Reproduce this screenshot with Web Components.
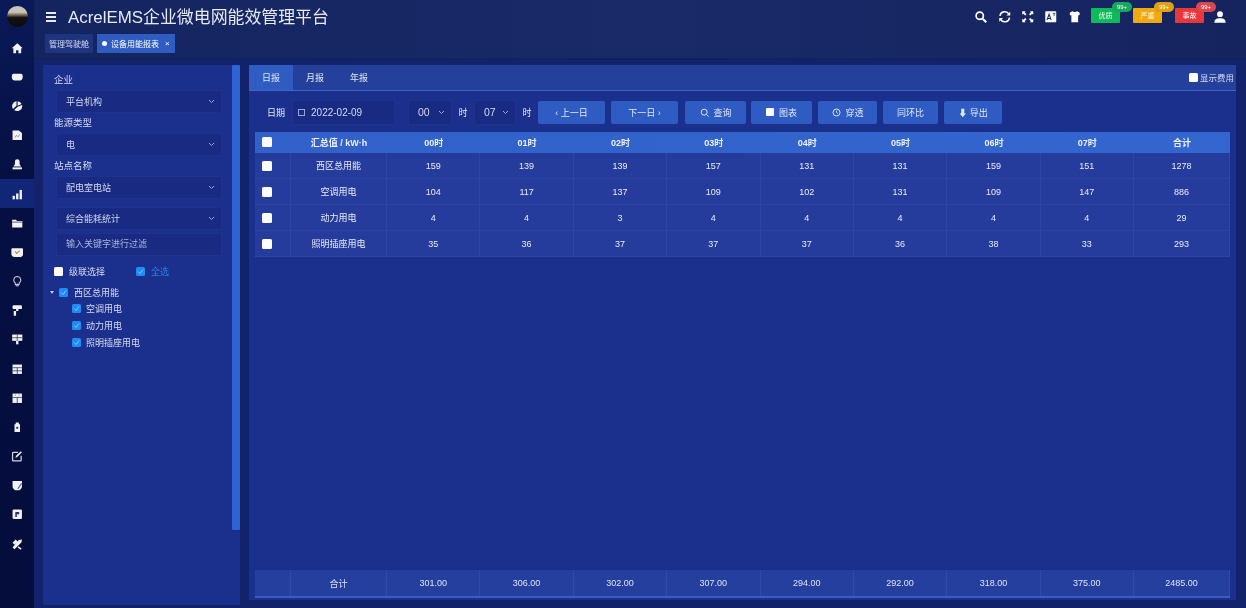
<!DOCTYPE html>
<html lang="zh">
<head>
<meta charset="utf-8">
<title>AcrelEMS</title>
<style>
  html, body { margin: 0; height: 100%; background: #13236b; overflow: hidden; }
  body { font-family: "Liberation Sans", "Noto Sans CJK SC", sans-serif; color: #fff; }
</style>
</head>
<body>
<ems-app></ems-app>
<script>
  const FONT = '"Liberation Sans", "Noto Sans CJK SC", sans-serif';

  // white glyphs, all on a 16x16 box
  const ICONS = {
    home: '<path d="M8 1.500 1 8h2v6.500h3.500v-4h3v4H13V8h2z"/>',
    chat: '<path d="M3.500 3.500h9c1.800 0 2.500 1.600 2.500 4s-1 4.500-3 4.500H4c-2 0-3-2-3-4.500s.7-4 2.500-4z"/>',
    pie: '<path d="M7 1.500v6L2.500 11.500A6.500 6.500 0 0 1 7 1.500z"/><path d="M8.500 1.500a6.500 6.500 0 0 1 5 3.500l-5 2.500z"/><path d="M14.300 6.500A6.500 6.500 0 0 1 4 12.800l4.500-4.300z"/>',
    file: '<path d="M2 2h8l4 3v9H2z"/><path d="M5 11l2-3 2 2 2-3" fill="none" stroke="#8b93b8" stroke-width="1.200"/>',
    bell: '<path d="M8 1.500a3 3 0 0 1 3 3V8l2 3H3l2-3V4.500a3 3 0 0 1 3-3z"/><rect x="2" y="12" width="12" height="2.500"/>',
    bars: '<rect x="2" y="10" width="3" height="4.500"/><rect x="6.500" y="7" width="3" height="7.500"/><rect x="11" y="2.500" width="3" height="12"/>',
    folder: '<path d="M1.500 3.500h5l1 1.500h7v8.500h-13z"/><rect x="1.500" y="6" width="13" height="1" fill="#2a3a70"/>',
    inbox: '<path d="M2 3h12c1 0 1.500.5 1.500 1.500v6c0 2-2 3.500-4 3.500h-7c-2 0-4-1.500-4-3.500v-6C.5 3.500 1 3 2 3z"/><path d="M5 7l2.500 2.500L11 6" fill="none" stroke="#c68a3a" stroke-width="1.300"/>',
    bulb: '<path d="M8 2a4.500 4.500 0 0 1 2.500 8.200V12h-5v-1.800A4.500 4.500 0 0 1 8 2z" fill="none" stroke="#c9cee4" stroke-width="1.300"/><rect x="6" y="13" width="4" height="1.500" fill="#c9cee4"/>',
    roller: '<rect x="2" y="1.500" width="12" height="5" rx="1.500"/><rect x="6.500" y="6" width="3" height="3"/><rect x="3.500" y="9" width="3" height="6"/>',
    board: '<rect x="1.500" y="2" width="13" height="8"/><rect x="6.500" y="10" width="3" height="4.500"/><path d="M1.500 6h13M8 2v8" stroke="#2a3a70"/>',
    calc: '<rect x="2" y="2" width="12" height="12"/><path d="M2 6h12M2 10h12M8 6v8" stroke="#2a3a70"/>',
    cal: '<rect x="2" y="2" width="12" height="12"/><path d="M2 7h12M8 7v7" stroke="#2a3a70"/><path d="M5 4h1M10 4h1" stroke="#2a3a70"/>',
    lock: '<path d="M6 2h4v2h1.500v10h-7V4H6z"/><rect x="6.800" y="7.500" width="2.400" height="2.400" fill="#16225c"/>',
    edit: '<path d="M13 7.500V13a1 1 0 0 1-1 1H3a1 1 0 0 1-1-1V4a1 1 0 0 1 1-1h6" fill="none" stroke="#d8dcf0" stroke-width="1.600"/><path d="M14 3 8 9l-2.500 1 1-2.500 6-6z"/>',
    note: '<path d="M2 2.500h12v7c0 3-2.500 5-6 5-3.500 0-6-2-6-5z"/><path d="M13 5l-4 6-1 2 2-1 4-6z" fill="#5a6590"/>',
    flag: '<rect x="2" y="2" width="12" height="12" rx="1.500"/><path d="M5.500 5h5v3h-3v3.500h-2z" fill="#2a3570"/>',
    tools: '<path d="M2 6l4-4 2.500 2.500-4 4zM10 2.500 14 2l-.5 3.500-9 9-2.500-2.500z"/><path d="M9.500 10.500l4 3-1 1.500-4-3z"/>',
    search: '<circle cx="6.800" cy="6.800" r="4.300" fill="none" stroke="#fff" stroke-width="2"/><path d="M10 10l4.500 4.500" stroke="#fff" stroke-width="2.400"/>',
    refresh: '<path d="M2.300 7A5.800 5.800 0 0 1 13 4.800M13.700 9A5.800 5.800 0 0 1 3 11.200" fill="none" stroke="#fff" stroke-width="1.800"/><path d="M14.500 2v4.500H10zM1.500 14V9.500H6z"/>',
    full: '<path d="M1.500 1.500h4L4.300 2.800 6.500 5 5 6.500 2.800 4.300 1.500 5.500zM14.500 1.500h-4l1.200 1.300L9.500 5 11 6.500l2.200-2.200 1.300 1.200zM1.500 14.500h4l-1.200-1.300L6.500 11 5 9.500l-2.200 2.200-1.300-1.200zM14.500 14.500h-4l1.200-1.300L9.500 11l1.500-1.500 2.200 2.200 1.300-1.200z"/>',
    trans: '<rect x="1.500" y="1.500" width="13" height="13" rx="1"/><path d="M3.500 12 6 5l2.500 7M4.500 10h3" fill="none" stroke="#22316e" stroke-width="1.300"/><path d="M10.500 4h3M12 4v3" stroke="#22316e"/>',
    shirt: '<path d="M5 1.500c1.500 1 4.500 1 6 0l2.500 1.500c.8 1 .5 2.500-.5 3.500l-1-.3V14.500H4V6.200l-1 .3c-1-1-1.300-2.500-.5-3.500z"/>',
    user: '<circle cx="8" cy="4.800" r="3.300"/><path d="M1.500 14.500c0-3.500 2.500-5 6.500-5s6.500 1.500 6.500 5z"/>'
  };
  const icon = (name, size) => `<svg width="${size}" height="${size}" viewBox="0 0 16 16" fill="#fff" aria-hidden="true">${ICONS[name]}</svg>`;

  class EmsSidebar extends HTMLElement {
    constructor() {
      super();
      this.attachShadow({ mode: 'open' });
      const names = ['home','chat','pie','file','bell','bars','folder','inbox','bulb','roller','board','calc','cal','lock','edit','note','flag','tools'];
      this.shadowRoot.innerHTML = `
        <style>
          :host { display: flex; flex-direction: column; width: 34px; background: linear-gradient(#0a1a58, #050f42 30%, #040d3b); }
          .logo { height: 33.400px; display: flex; align-items: center; justify-content: center; }
          .logo i { width: 21px; height: 21px; border-radius: 50%; background: linear-gradient(#c8c3b4 0 30%, #7a6f5c 42%, #15120f 55%, #0b0a12); }
          .item { height: 29.180px; display: flex; align-items: center; justify-content: center; opacity: .95; }
          .item.active { background: #13287a; }
        </style>
        <div class="logo"><i></i></div>
        ${names.map(n => `<div class="item ${n === 'bars' ? 'active' : ''}">${icon(n, 12.500)}</div>`).join('')}
      `;
    }
  }
  customElements.define('ems-sidebar', EmsSidebar);

  class EmsHeader extends HTMLElement {
    constructor() {
      super();
      this.attachShadow({ mode: 'open' });
      const tool = n => `<span class="tool">${icon(n, 13.500)}</span>`;
      const badge = (txt, count, bg, pill) => `<span class="badge" style="background:${bg}">${txt}<b style="background:${pill}">${count}</b></span>`;
      this.shadowRoot.innerHTML = `
        <style>
          :host { display: block; height: 60px; box-sizing: border-box; background: linear-gradient(90deg, #14245f, #1a2a69 50%, #15245f); border-bottom: 2px solid #12225f; }
          .top { display: flex; align-items: center; height: 33px; padding-left: 12px; }
          .menu { width: 10px; height: 10px; display: flex; flex-direction: column; justify-content: space-between; margin-right: 12px; }
          .menu i { height: 2px; background: #e8ebf8; }
          h1 { margin: -2px 0 0; font: 400 16.900px ${FONT}; color: #e6e9f6; flex: 1; }
          .tools { display: flex; align-items: center; padding-right: 19px; }
          .tool { width: 23.300px; display: flex; justify-content: center; }
          .tool + .badge { margin-left: 5px; }
          .badge { position: relative; width: 29px; height: 15px; margin-left: 13px; border-radius: 1px; font-size: 7px; line-height: 15px; text-align: center; color: #fff; top: -1px; }
          .badge b { position: absolute; left: 21px; top: -6px; width: 20px; height: 10px; border-radius: 5px; font: 400 6px/10px ${FONT}; }
          .me { margin-left: 9px; display: flex; }
          .tabs { display: flex; gap: 4px; padding-left: 11px; height: 19px; margin-top: 1px; }
          .tab { display: flex; align-items: center; padding: 0 4px; font-size: 8px; background: #1f347f; color: #d5daf0; }
          .tab.on { background: #2f5cc0; color: #fff; padding: 0 5px; gap: 4px; }
          .tab em { font-style: normal; margin-left: 2px; }
          .dot { width: 5px; height: 5px; border-radius: 50%; background: #fff; }
        </style>
        <div class="top">
          <div class="menu"><i></i><i></i><i></i></div>
          <h1>AcrelEMS企业微电网能效管理平台</h1>
          <div class="tools">
            ${['search','refresh','full','trans','shirt'].map(tool).join('')}
            ${badge('优质', '99+', '#10b95a', '#16a85c')}
            ${badge('严重', '99+', '#f0a90f', '#e0a011')}
            ${badge('事故', '99+', '#e8383c', '#d9474f')}
            <span class="me">${icon('user', 14)}</span>
          </div>
        </div>
        <div class="tabs">
          <span class="tab">管理驾驶舱</span>
          <span class="tab on"><i class="dot"></i>设备用能报表<em>×</em></span>
        </div>
      `;
    }
  }
  customElements.define('ems-header', EmsHeader);

  class EmsSelect extends HTMLElement {
    constructor() {
      super();
      this.attachShadow({ mode: 'open' });
      this.shadowRoot.innerHTML = `
        <style>
          :host { display: flex; align-items: center; justify-content: space-between; box-sizing: border-box; height: 23px; padding: 0 6px 0 9px; background: #182a82; border: 1px solid #1e338c; border-radius: 2px; font-size: 9px; color: #d5daf0; }
          svg { flex: none; }
        </style>
        <slot></slot>
        <svg width="7" height="5" viewBox="0 0 7 5"><path d="M1 1l2.500 2.500L6 1" fill="none" stroke="#9aa6d6" stroke-width="1"/></svg>
      `;
    }
  }
  customElements.define('ems-select', EmsSelect);

  class EmsCheck extends HTMLElement {
    constructor() {
      super();
      this.attachShadow({ mode: 'open' });
      const on = this.hasAttribute('checked');
      this.shadowRoot.innerHTML = `
        <style>
          :host { display: inline-flex; align-items: center; gap: 6px; font-size: 9px; color: #d8dcf2; }
          i { width: 9px; height: 9px; border-radius: 1.500px; background: ${on ? '#1f8cf5' : '#fff'}; display: flex; flex: none; }
        </style>
        <i>${on ? '<svg width="9" height="9" viewBox="0 0 9 9"><path d="M2 4.500 4 6.500 7 2.500" fill="none" stroke="#8cc6ff" stroke-width="1"/></svg>' : ''}</i>
        <slot></slot>
      `;
    }
  }
  customElements.define('ems-check', EmsCheck);

  class EmsFilter extends HTMLElement {
    constructor() {
      super();
      this.attachShadow({ mode: 'open' });
      this.shadowRoot.innerHTML = `
        <style>
          :host { display: flex; width: 197px; background: #1b308c; flex: none; }
          .body { flex: 1; padding: 10px 10px 0 11px; min-width: 0; }
          .bar { flex: none; width: 8px; height: 465px; background: #2f62d2; border-radius: 1px; }
          label { display: block; font-size: 9.500px; line-height: 10px; color: #d5daf0; margin-bottom: 5px; }
          ems-select { margin: 0 0 5px 2px; }
          ems-select.wide { margin-bottom: 8px; }
          ems-select.near { margin-bottom: 3px; }
          .input { margin-left: 2px; height: 23px; box-sizing: border-box; padding: 0 9px; border: 1px solid #1e338c; background: #182a82; font-size: 9px; line-height: 21px; color: #a9b4dc; }
          .all { display: flex; gap: 31px; margin-top: 10px; height: 10px; align-items: center; }
          .blue { color: #2b84e8; }
          .tree { margin-top: 7.500px; }
          .tree div { display: flex; align-items: center; height: 16.800px; padding-left: 18px; }
          .tree .root { padding-left: 0; margin-left: -4px; gap: 5px; height: 17px; }
          .tree ems-check { gap: 5px; }
          .tree .root ems-check { gap: 6px; }
          .caret { width: 0; height: 0; border: 2.500px solid transparent; border-top: 3px solid #c4cbe8; margin-top: 3px; }
        </style>
        <div class="body">
          <label>企业</label>
          <ems-select>平台机构</ems-select>
          <label>能源类型</label>
          <ems-select>电</ems-select>
          <label>站点名称</label>
          <ems-select class="wide">配电室电站</ems-select>
          <ems-select class="near">综合能耗统计</ems-select>
          <div class="input">输入关键字进行过滤</div>
          <div class="all">
            <ems-check>级联选择</ems-check>
            <ems-check checked><span class="blue">全选</span></ems-check>
          </div>
          <div class="tree">
            <div class="root"><i class="caret"></i><ems-check checked>西区总用能</ems-check></div>
            <div><ems-check checked>空调用电</ems-check></div>
            <div><ems-check checked>动力用电</ems-check></div>
            <div><ems-check checked>照明插座用电</ems-check></div>
          </div>
        </div>
        <div class="bar"></div>
      `;
    }
  }
  customElements.define('ems-filter', EmsFilter);

  class EmsButton extends HTMLElement {
    constructor() {
      super();
      this.attachShadow({ mode: 'open' });
      this.shadowRoot.innerHTML = `
        <style>
          :host { display: inline-flex; align-items: center; justify-content: center; gap: 5px; box-sizing: border-box; height: 23px; background: #2e5cc2; border-radius: 2px; font-size: 9px; color: #e3e8f8; }
        </style>
        <slot></slot>
      `;
    }
  }
  customElements.define('ems-button', EmsButton);

  class EmsTable extends HTMLElement {
    constructor() {
      super();
      this.attachShadow({ mode: 'open' });
      const hours = ['00时','01时','02时','03时','04时','05时','06时','07时'];
      const rows = [
        ['西区总用能',159,139,139,157,131,131,159,151,1278],
        ['空调用电',104,117,137,109,102,131,109,147,886],
        ['动力用电',4,4,3,4,4,4,4,4,29],
        ['照明插座用电',35,36,37,37,37,36,38,33,293]
      ];
      const foot = ['合计','301.00','306.00','302.00','307.00','294.00','292.00','318.00','375.00','2485.00'];
      const box = '<i class="box"></i>';
      const cells = r => r.map(c => `<span>${c}</span>`).join('');
      this.shadowRoot.innerHTML = `
        <style>
          :host { display: flex; flex-direction: column; flex: 1; margin: 0 6px 2px; font-size: 9px; min-height: 0; }
          .row { display: grid; grid-template-columns: 36px 96px repeat(8, 1fr) 96px; height: 26px; box-sizing: border-box; padding-bottom: 1px; }
          .row span { display: flex; align-items: center; justify-content: center; border-right: 1px solid #2d45a6; }
          .row span.chk { justify-content: flex-start; padding-left: 7px; }
          .head { height: 21px; background: linear-gradient(90deg, #3161c9, #3366cf); font-weight: 700; color: #eef1fb; }
          .head span { border-right: 0 !important; }
          .body .row { background: #253c9c; border-bottom: 1px solid #2c44a6; padding-bottom: 0; color: #e9ecf9; }
          .box { width: 10px; height: 10px; background: #fff; border-radius: 1.500px; }
          .fill { flex: 1; }
          .foot { height: 28px; background: #253f9f; border-bottom: 2px solid #3a5cc0; padding-bottom: 0; color: #dfe4f7; }
          .foot span { border-right-color: #3049ab; }
        </style>
        <div class="row head"><span class="chk">${box}</span><span>汇总值 / kW·h</span>${cells(hours)}<span>合计</span></div>
        <div class="body">
          ${rows.map(r => `<div class="row"><span class="chk">${box}</span>${cells(r)}</div>`).join('')}
        </div>
        <div class="fill"></div>
        <div class="row foot"><span></span>${cells(foot)}</div>
      `;
    }
  }
  customElements.define('ems-table', EmsTable);

  class EmsReport extends HTMLElement {
    constructor() {
      super();
      this.attachShadow({ mode: 'open' });
      this.shadowRoot.innerHTML = `
        <style>
          :host { display: flex; flex-direction: column; flex: 1; min-width: 0; margin-bottom: 5px; background: #1b308c; }
          .tabs { display: flex; align-items: stretch; height: 26px; box-sizing: border-box; background: #25409a; border-bottom: 1px solid #3f63c8; font-size: 9px; color: #dfe4f7; }
          .tabs b { font-weight: 400; width: 44px; display: flex; align-items: center; justify-content: center; padding-bottom: 1px; box-sizing: border-box; }
          .tabs b.on { background: #2f5cc0; }
          .cost { margin-left: auto; margin-right: 2px; padding-bottom: 1px; display: flex; align-items: center; white-space: nowrap; }
          .cost ems-check { gap: 2px; font-size: 8.500px; }
          .bar { display: flex; align-items: center; height: 41px; box-sizing: border-box; padding: 1px 0 0 18px; font-size: 9px; color: #e3e8f8; }
          .date { display: flex; align-items: center; gap: 6px; box-sizing: border-box; width: 103px; height: 25px; margin: 0 13px 0 7px; padding-left: 5px; background: #182a82; border: 1px solid #1e338c; font-size: 10px; color: #d5daf0; }
          .cal { width: 7px; height: 7px; border: 1px solid #9aa6d6; box-sizing: border-box; }
          ems-select.t { padding: 0 6px 0 9px; height: 25px; font-size: 10.500px; }
          .u { width: 22px; text-align: center; }
          svg { flex: none; }
        </style>
        <div class="tabs">
          <b class="on">日报</b><b>月报</b><b>年报</b>
          <div class="cost"><ems-check>显示费用</ems-check></div>
        </div>
        <div class="bar">
          <span>日期</span>
          <div class="date"><i class="cal"></i>2022-02-09</div>
          <ems-select class="t" style="width:44px">00</ems-select><span class="u">时</span>
          <ems-select class="t" style="width:42px">07</ems-select><span class="u">时</span>
          <ems-button style="width:67px;margin-right:6px">‹ 上一日</ems-button>
          <ems-button style="width:67px;margin-right:7px">下一日 ›</ems-button>
          <ems-button style="width:61px;margin-right:5px"><svg width="9" height="9" viewBox="0 0 9 9"><circle cx="4.200" cy="4.200" r="3" fill="none" stroke="#dfe4f7"/><path d="M6.500 6.500l2 2" stroke="#dfe4f7"/></svg>查询</ems-button>
          <ems-button style="width:61px;margin-right:6px"><i style="width:8px;height:8px;background:#fff;border-radius:1px"></i>图表</ems-button>
          <ems-button style="width:59px;margin-right:6px"><svg width="9" height="9" viewBox="0 0 9 9"><circle cx="4.500" cy="4.500" r="3.500" fill="none" stroke="#dfe4f7"/><path d="M4.500 2.500v2l1.500 1" fill="none" stroke="#dfe4f7" stroke-width=".8"/></svg>穿透</ems-button>
          <ems-button style="width:55px;margin-right:6px">同环比</ems-button>
          <ems-button style="width:58px">⬇ 导出</ems-button>
        </div>
        <ems-table></ems-table>
      `;
    }
  }
  customElements.define('ems-report', EmsReport);

  class EmsApp extends HTMLElement {
    constructor() {
      super();
      this.attachShadow({ mode: 'open' });
      this.shadowRoot.innerHTML = `
        <style>
          :host { display: grid; grid-template-columns: 34px 1fr; height: 608px; overflow: hidden; filter: blur(.45px); background: #13236b; }
          .right { display: flex; flex-direction: column; min-width: 0; height: 608px; }
          main { flex: 1; display: flex; gap: 9px; padding: 5px 10px 3px 9px; min-height: 0; }
        </style>
        <ems-sidebar></ems-sidebar>
        <div class="right">
          <ems-header></ems-header>
          <main>
            <ems-filter></ems-filter>
            <ems-report></ems-report>
          </main>
        </div>
      `;
    }
  }
  customElements.define('ems-app', EmsApp);
</script>
</body>
</html>
